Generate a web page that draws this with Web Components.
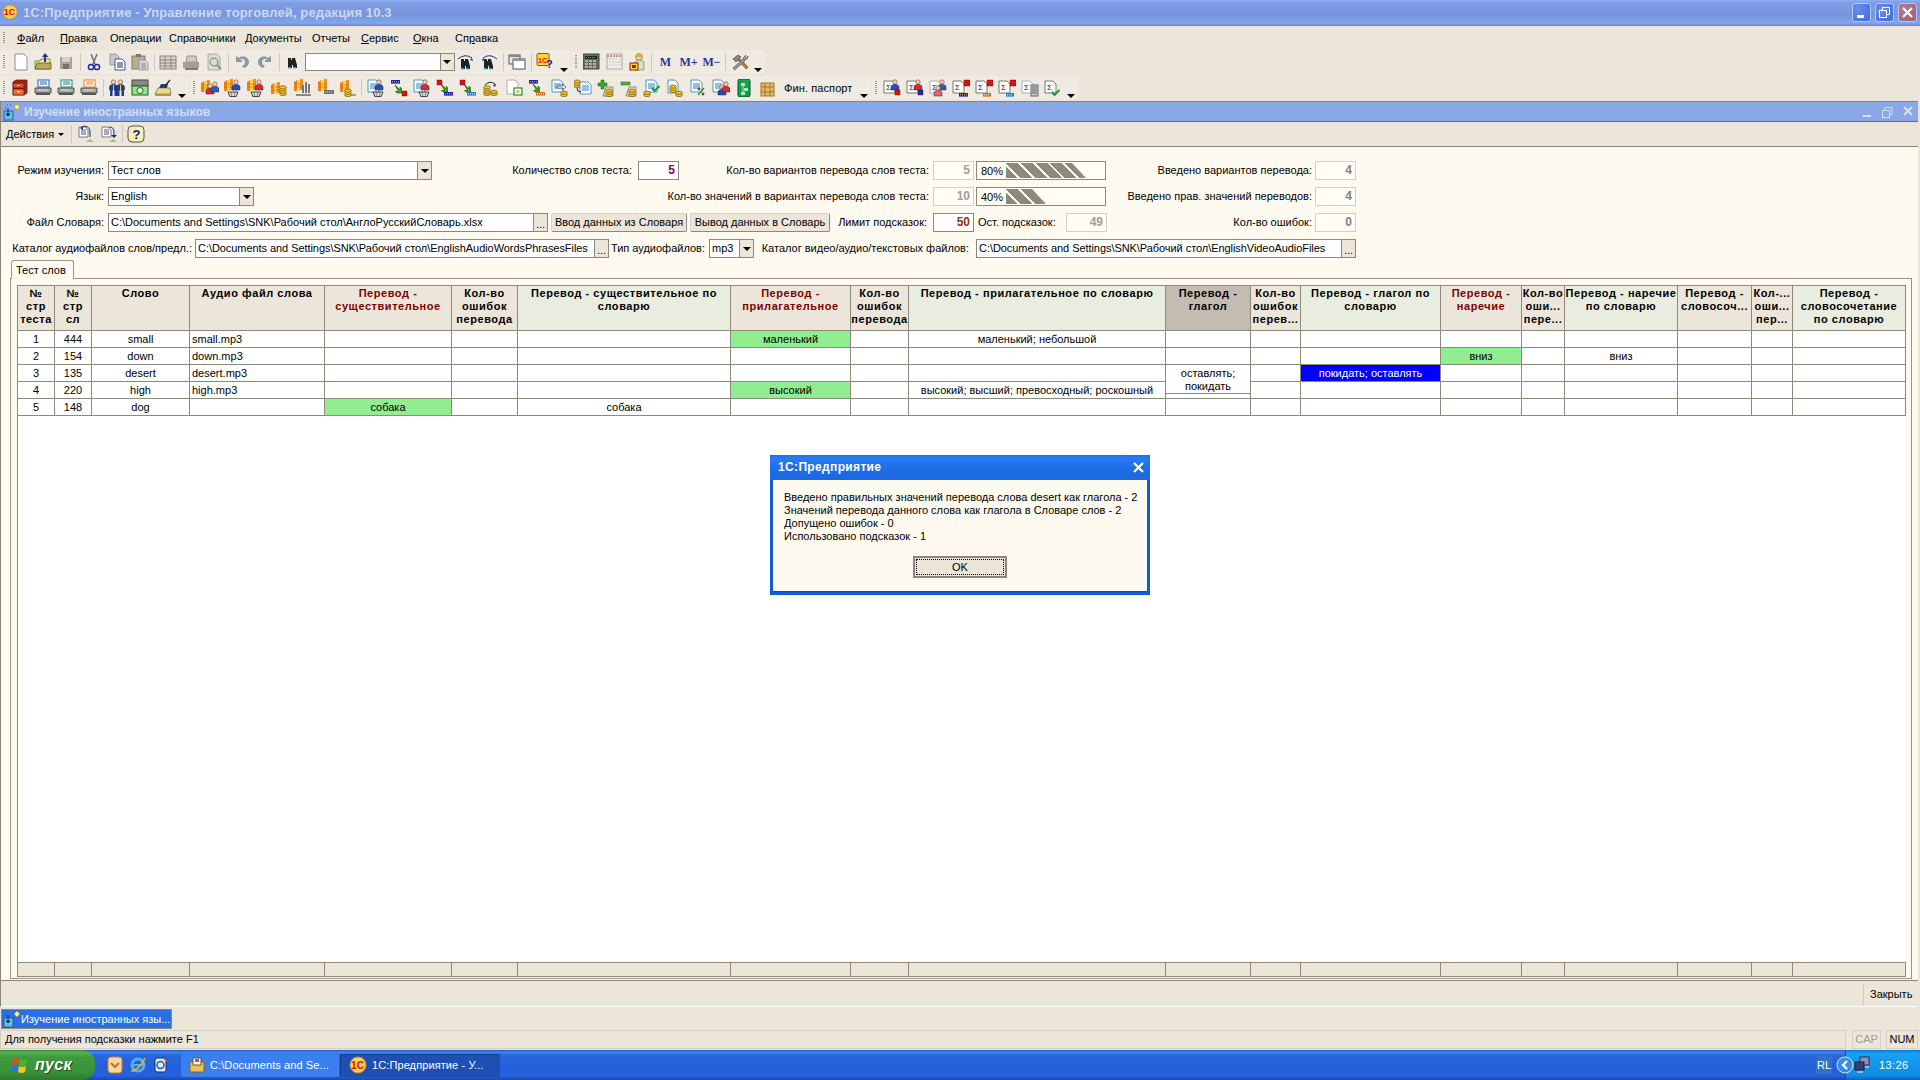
<!DOCTYPE html>
<html lang="ru">
<head>
<meta charset="utf-8">
<title>1С:Предприятие</title>
<style>
html,body{margin:0;padding:0;height:100%;overflow:hidden}
body{font:11px "Liberation Sans",Arial,sans-serif;color:#000;background:#ece5da}
</style>
</head>
<body>
<desk-top>
    <title-bar></title-bar>
    <menu-bar>
        <menu-item w="43"><u>Ф</u>айл</menu-item>
        <menu-item w="50"><u>П</u>равка</menu-item>
        <menu-item w="59">Операции</menu-item>
        <menu-item w="76">Справочники</menu-item>
        <menu-item w="67">Документы</menu-item>
        <menu-item w="49">Отчеты</menu-item>
        <menu-item w="52"><u>С</u>ервис</menu-item>
        <menu-item w="42"><u>О</u>кна</menu-item>
        <menu-item w="50">Сп<u>р</u>авка</menu-item>
    </menu-bar>
    <tool-row top="1">
        <tool-bar items="new open save | cut copy paste | table print preview | undo redo | binoc combo findnext findprev | windows | help1c >"></tool-bar>
        <tool-bar items="calc calendar lock | t:M t:M+ t:M− | hammer >"></tool-bar>
    </tool-row>
    <tool-row top="2">
        <tool-bar items="cabinet prtable prgreen prorange | people money writing >"></tool-bar>
        <tool-bar items="bman bmancart bredcart bcoins bchart bbar bcoin2 | dmancart barcube dredcart cubebar cubetab coinarrow docbox barorange docarrow coinlines pluscoin minuscoin doccheck doccoins docpercent docmen greenbox woodbox txt:Фин._паспорт >"></tool-bar>
        <tool-bar items="s1 s2 s3 s4 s5 s6 s7 s8 >"></tool-bar>
    </tool-row>
    <child-window>
        <form-panel>
            <form-row>
                <f-label w="108" pr="4">Режим изучения:</f-label>
                <f-combo w="324">Тест слов</f-combo>
                <f-label w="206" pr="6">Количество слов теста:</f-label>
                <f-input w="41" value="5" color="#800080"></f-input>
                <f-label w="254" pr="4">Кол-во вариантов перевода слов теста:</f-label>
                <f-input w="41" value="5" off></f-input>
                <f-progress percent="80"></f-progress>
                <f-label w="209" pr="3">Введено вариантов перевода:</f-label>
                <f-input w="41" value="4" off bold></f-input>
            </form-row>
            <form-row>
                <f-label w="108" pr="4">Язык:</f-label>
                <f-combo w="146">English</f-combo>
                <f-label w="679" pr="4">Кол-во значений в вариантах перевода слов теста:</f-label>
                <f-input w="41" value="10" off></f-input>
                <f-progress percent="40"></f-progress>
                <f-label w="209" pr="3">Введено прав. значений переводов:</f-label>
                <f-input w="41" value="4" off bold></f-input>
            </form-row>
            <form-row>
                <f-label w="108" pr="4">Файл Словаря:</f-label>
                <f-path w="440">C:\Documents and Settings\SNK\Рабочий стол\АнглоРусскийСловарь.xlsx</f-path>
                <f-button w="136" ml="3">Ввод данных из Словаря</f-button>
                <f-button w="140" ml="3">Вывод данных в Словарь</f-button>
                <f-label w="103" pr="6">Лимит подсказок:</f-label>
                <f-input w="41" value="50" color="#993300"></f-input>
                <f-label w="92" left>Ост. подсказок:</f-label>
                <f-input w="41" value="49" off></f-input>
                <f-label w="208" pr="3">Кол-во ошибок:</f-label>
                <f-input w="41" value="0" off bold></f-input>
            </form-row>
            <form-row>
                <f-label w="195" pr="3">Каталог аудиофайлов слов/предл.:</f-label>
                <f-path w="414" tight>C:\Documents and Settings\SNK\Рабочий стол\EnglishAudioWordsPhrasesFiles</f-path>
                <f-label w="100" pr="4">Тип аудиофайлов:</f-label>
                <f-combo w="45">mp3</f-combo>
                <f-label w="222" pr="7">Каталог видео/аудио/текстовых файлов:</f-label>
                <f-path w="380" tight>C:\Documents and Settings\SNK\Рабочий стол\EnglishVideoAudioFiles</f-path>
            </form-row>
            <tab-page label="Тест слов">
                <data-grid></data-grid>
            </tab-page>
        </form-panel>
    </child-window>
    <window-tabs>Изучение иностранных язы...</window-tabs>
    <status-bar>Для получения подсказки нажмите F1</status-bar>
    <task-bar></task-bar>
    <msg-box caption="1С:Предприятие">Введено правильных значений перевода слова desert как глагола - 2
Значений перевода данного слова как глагола в Словаре слов - 2
Допущено ошибок - 0
Использовано подсказок - 1</msg-box>
</desk-top>

<script>
// **************************************************************************** icon parts
const doc = (x, y, w, h, s = "#556", f = "#fff") => `<path d="M${x} ${y}h${w - 3}l3 3v${h - 3}h-${w}z" fill="${f}" stroke="${s}" stroke-width=".8"/>`;
const lines = (x, y, w, n = 3, c = "#2b7fc0") => Array(n).fill().map((_, i) => `<path d="M${x} ${y + i * 2}h${w}" stroke="${c}"/>`).join("");
const coins = (x, y, n = 3) => Array(n).fill().map((_, i) => `<ellipse cx="${x}" cy="${y - i * 2.2}" rx="3.4" ry="1.6" fill="#f0c030" stroke="#7a5a00" stroke-width=".7"/>`).join("");
const man = (x, y, c) => `<circle cx="${x}" cy="${y}" r="2.2" fill="#f6cfa8" stroke="#622" stroke-width=".5"/><path d="M${x - 4} ${y + 8}v-3q0-2.6 4-2.6t4 2.6v3z" fill="${c}" stroke="#224" stroke-width=".5"/>`;
const cart = (x, y) => `<path d="M${x} ${y}h10l-1.800 4.500h-6.400z" fill="#d8d8d8" stroke="#333" stroke-width=".9"/><path d="M${x + 3.300} ${y}v4.500M${x + 6.600} ${y}v4.500" stroke="#555" stroke-width=".6"/>`;
const books = (x, y) => `<path d="M${x} ${y + 2}l3-2v11h-3z" fill="#f08020"/><path d="M${x + 3} ${y}h3v11h-3z" fill="#f8d040"/><path d="M${x + 6} ${y - 1}h3v11h-3z" fill="#f09020"/><path d="M${x} ${y + 4}h9M${x} ${y + 7}h9" stroke="#b06010" stroke-width=".5"/>`;
const cube = (x, y, c = "#e01010", s = 5) => `<rect x="${x}" y="${y}" width="${s}" height="${s}" fill="${c}" stroke="#600" stroke-width=".4"/>`;
const tag = (x, y, c = "#2020a0", d = "#ffd040", w = 9) => `<rect x="${x}" y="${y}" width="${w}" height="3.600" fill="${c}"/><path d="M${x + 1} ${y + 1.800}h${w - 2}" stroke="${d}" stroke-dasharray="1 1"/>`;
const garrow = (x, y) => `<path d="M${x} ${y}l5 5v-3l1.500 1.500v4.500h-4.500l-1.500-1.500h3z" fill="#40b020" stroke="#104000" stroke-width=".6"/>`;
const pct = (x, y) => `<path d="M${x} ${y + 7}l6-7" stroke="#109030" stroke-width="1.200"/>${cube(x, y, "#20a040", 2)}${cube(x + 4, y + 5, "#20a040", 2)}`;
const chk = (x, y) => `<path d="M${x} ${y + 2}l2.500 3 5-5" fill="none" stroke="#10a030" stroke-width="2"/>`;
const bdoc = (x = 1, y = 2) => doc(x, y, 11, 12, "#2b7fc0") + lines(x + 2, y + 4, 7);
const sig = (x = 1, y = 2, c = "#555") => doc(x, y, 11, 12, c) + `<text x="${x + 2}" y="${y + 9}" font-size="8" fill="#222" font-family="Liberation Sans">Σ</text>`;
const printer = c => `<rect x="4" y="1" width="11" height="7" fill="#fff" stroke="${c}"/>${lines(6, 3, 7, 2, c)}<path d="M1 9h16v5H1z" fill="#a8a8a8" stroke="#333" stroke-width=".8"/><path d="M2 14h14v2H2z" fill="#555"/><path d="M4 11h10" stroke="#ddd"/>`;
const binoc = (x = 3, y = 5) => `<path d="M${x + 1} ${y}h3v2h1v-2h3l2 7v3h-4v-3H${x + 5}v3h-4v-3z" fill="#222"/><rect x="${x + 1}" y="${y + 9}" width="3" height="1.500" fill="#40a0d0"/><rect x="${x + 6}" y="${y + 9}" width="3" height="1.500" fill="#40a0d0"/>`;
const logo1c = (cx, cy, r) => `<circle cx="${cx}" cy="${cy}" r="${r}" fill="#fbd24a" stroke="#d08a20" stroke-width=".8"/><text x="${cx - r + 1}" y="${cy + r * .45}" font-size="${r * 1.25}" font-weight="700" fill="#d81010" font-family="Liberation Sans">1С</text>`;

// **************************************************************************** icons, 18x18
const ICONS = {
    new: doc(4, 1, 12, 16, "#777"),
    open: `<path d="M1 8h5l1-2h9v10H1z" fill="#f6ea9c" stroke="#776a20" stroke-width=".8"/><path d="M1 16l2-6h14v6z" fill="#b8ac60" stroke="#665a20" stroke-width=".8"/><path d="M11 0l3.500 4H12v5h-2V4H8z" fill="#203a90"/>`,
    save: `<rect x="3" y="4" width="12" height="12" fill="#a8a498"/><rect x="5" y="4" width="8" height="5" fill="#d4d0c4"/><rect x="6" y="11" width="6" height="5" fill="#78746a"/>`,
    cut: `<path d="M6 1l4 10M12 1L8 11" stroke="#667" stroke-width="1.400"/><circle cx="6" cy="14" r="2.600" fill="none" stroke="#1c2c98" stroke-width="1.500"/><circle cx="12" cy="14" r="2.600" fill="none" stroke="#1c2c98" stroke-width="1.500"/>`,
    copy: doc(2, 1, 9, 11, "#8c8c9c", "#c8c8d0") + doc(7, 6, 10, 11, "#1c2c80") + lines(9, 10, 6, 3, "#1c2c80"),
    paste: `<rect x="1" y="3" width="13" height="13" fill="#b4b094" stroke="#807c64"/><rect x="5" y="1" width="5" height="3" fill="#807c64"/>` + doc(8, 7, 9, 10, "#8c8c9c", "#d8d8dc") + lines(10, 11, 5, 3, "#888"),
    table: `<rect x="1" y="3" width="16" height="13" fill="#d8d4c8" stroke="#8a8678"/><path d="M1 7h16M1 10h16M1 13h16M6 3v13M12 3v13" stroke="#8a8678"/>`,
    print: `<path d="M5 3h9l1 6H4z" fill="#d0ccc0" stroke="#989488"/><path d="M1 9h16v6H1z" fill="#a4a094"/><path d="M3 15h13v2H3z" fill="#807c70"/>`,
    preview: doc(3, 1, 12, 16, "#a0a094", "#dcdcd0") + `<circle cx="9" cy="9" r="3.800" fill="#cfe0e4" stroke="#908c80" stroke-width="1.200"/><path d="M12 12l4 4" stroke="#908c80" stroke-width="2"/>`,
    undo: `<path d="M4 3v6h6V7L7 6.500C9 5 13 6 13 9c0 2-1 3-3 4l2 2c3-1 5-3 5-6 0-5-7-7-10-4z" fill="#8b98a8" transform="translate(-1 0)"/>`,
    redo: `<g transform="matrix(-1 0 0 1 18 0)"><path d="M4 3v6h6V7L7 6.500C9 5 13 6 13 9c0 2-1 3-3 4l2 2c3-1 5-3 5-6 0-5-7-7-10-4z" fill="#8b98a8" transform="translate(-1 0)"/></g>`,
    binoc: binoc(),
    findnext: binoc(3, 6) + `<path d="M1 6Q8 0 15 5" fill="none" stroke="#203080"/><path d="M15 5l1 3-3-1z" fill="#203080"/>`,
    findprev: binoc(3, 6) + `<path d="M17 6Q10 0 3 5" fill="none" stroke="#203080"/><path d="M3 5l-1 3 3-1z" fill="#203080"/>`,
    windows: `<rect x="1" y="2" width="11" height="9" fill="#e8e8e8" stroke="#555"/><rect x="1" y="2" width="11" height="2" fill="#808890"/><rect x="5" y="6" width="12" height="10" fill="#fff" stroke="#555"/><rect x="5" y="6" width="12" height="2" fill="#909aa8"/>`,
    help1c: `<rect x="1" y="0.500" width="12" height="12" rx="1" fill="#f8d830" stroke="#a05010"/><text x="2" y="9.500" font-size="7" font-weight="700" fill="#d81010" font-family="Liberation Sans">1С</text><text x="10" y="15" font-size="11" font-weight="700" fill="#1c2c90" font-family="Liberation Sans">?</text>`,
    calc: `<rect x="0" y="1" width="16" height="15" fill="#6a6a64" stroke="#444"/><rect x="2" y="3" width="12" height="3" fill="#103010"/><path d="M3 4.500h10" stroke="#30e030" stroke-dasharray="1 1"/><path d="M2 8h12M2 11h12M2 14h12" stroke="#c4c4bc" stroke-width="1.600" stroke-dasharray="3 1"/>`,
    calendar: `<rect x="1" y="1" width="15" height="15" fill="#f8f6ec" stroke="#aaa89c"/><path d="M1 3h15" stroke="#e06040" stroke-width="1.500" stroke-dasharray="2 1"/><path d="M1 6h15M1 9h15M1 12h15M4 4v12M7 4v12M10 4v12M13 4v12" stroke="#c4c4d8" stroke-width=".6"/>`,
    lock: `<circle cx="10" cy="4" r="3.400" fill="#f6cfa8" stroke="#a87"/><path d="M7 1h6l1 3H7z" fill="#d8b040"/><path d="M6 17V9q1-2 4-2t5 2v8z" fill="#cfe0c0" stroke="#689058" stroke-width=".7"/><rect x="1" y="10" width="8" height="7" fill="#f8d820" stroke="#802020"/><rect x="3" y="12" width="4" height="3" fill="#a02020"/>`,
    hammer: `<path d="M2 6l5-4 3 2-5 5z" fill="#8a8a8a" stroke="#444" stroke-width=".7"/><path d="M7 7l8 9 2-2-8-8z" fill="#b08040" stroke="#604010" stroke-width=".6"/><path d="M15 2l-3 3 1 2 3-1 1-3-1 2-2-1z" fill="#aaa" stroke="#444" stroke-width=".6"/><path d="M12 6L2 15l1.500 2L14 8z" fill="#999" stroke="#444" stroke-width=".6"/>`,
    cabinet: `<path d="M2 3l3-2h11v13l-3 2H2z" fill="#a02818" stroke="#401008" stroke-width=".7"/><rect x="2" y="4" width="11" height="5" fill="#e84820" stroke="#401008" stroke-width=".6"/><rect x="2" y="10" width="11" height="6" fill="#f07030" stroke="#401008" stroke-width=".6"/><rect x="6" y="6" width="3" height="1" fill="#fff"/><rect x="6" y="12" width="3" height="1" fill="#fff"/>`,
    prtable: printer("#2060b0"),
    prgreen: printer("#108a80"),
    prorange: printer("#e08030"),
    people: man(5.500, 3, "#1c3c90") + `<path d="M2 10v7h2.500v-7zM6.500 10v7H9v-7z" fill="#1c3c90"/>` + man(12.500, 3, "#1c3c90") + `<path d="M9 10v7h2.500v-7zM13.500 10v7H16v-7z" fill="#1c3c90"/><path d="M5 6h1v6H5zM12 6h1v6h-1z" fill="#f8d820"/>`,
    money: `<rect x="1" y="1" width="16" height="6" fill="#8a8a84" stroke="#444"/><rect x="1" y="7" width="16" height="9" fill="#90e090" stroke="#206020"/><circle cx="9" cy="11.500" r="3" fill="#f0f8d0" stroke="#206020"/>`,
    writing: `<path d="M1 15l3-6h12l1 6z" fill="#e8dc90" stroke="#807020" stroke-width=".7"/><path d="M5 9l2-4h7l-1 4z" fill="#2a3a9c"/><path d="M11 7l5-6" stroke="#222" stroke-width="1.300"/><path d="M1 15h16v2H1z" fill="#a89850"/>`,
    bman: books(0, 2) + man(9, 7, "#e02828") + man(14, 5, "#3060b0"),
    bmancart: books(0, 1) + man(12, 3, "#2050c0") + cart(4, 13),
    bredcart: books(0, 1) + man(12, 3, "#e02828") + cart(4, 13),
    bcoins: books(1, 4) + coins(13, 15, 4),
    bchart: books(1, 1) + `<path d="M10 6v8M13 3v11M16 5v9" stroke="#777" stroke-width="2"/><path d="M3 15h15v2H3z" fill="#888"/>`,
    bbar: books(2, 1) + `<rect x="8" y="11" width="10" height="4" fill="#707070"/><path d="M9 13h8" stroke="#ddd" stroke-dasharray="1 1"/>`,
    bcoin2: books(1, 2) + coins(9, 16, 3) + `<path d="M12 16h5" stroke="#555"/>`,
    dmancart: bdoc(1, 1) + man(12, 3, "#2050c0") + cart(6, 13),
    barcube: tag(1, 1) + garrow(5, 6) + cube(12, 12),
    dredcart: bdoc(1, 1) + man(12, 3, "#e02828") + cart(6, 13),
    cubebar: cube(1, 1) + garrow(5, 5) + tag(8, 13),
    cubetab: cube(1, 1) + garrow(5, 5) + tag(8, 13, "#2080d0", "#fff"),
    coinarrow: coins(5, 15, 4) + coins(12, 15, 2) + `<path d="M3 6Q8 1 13 5" fill="none" stroke="#223"/><path d="M14 5l-3 1 2 2z" fill="#223"/>`,
    docbox: doc(2, 1, 11, 14, "#999") + `<rect x="9" y="9" width="8" height="7" fill="#fff" stroke="#209030" stroke-width="1.200"/><circle cx="13" cy="12.500" r="1.500" fill="#e0b020"/>`,
    barorange: tag(1, 1) + garrow(5, 5) + tag(8, 13, "#d07020", "#fff"),
    docarrow: bdoc(1, 1) + `<path d="M6 7h6l-1-2 4 3-4 3 1-2H6z" fill="#fff" stroke="#223" stroke-width=".6"/>` + coins(13, 16, 2),
    coinlines: coins(3, 7, 3) + doc(6, 3, 11, 12, "#2b7fc0") + lines(8, 7, 7) + `<path d="M3 9q0 4 4 4" fill="none" stroke="#223"/>`,
    pluscoin: `<path d="M4 1h3v3h3v3H7v3H4V7H1V4h3z" fill="#30b020" stroke="#105000" stroke-width=".5"/><path d="M9 8h7v9H6z" fill="#e8e4d8" stroke="#888"/>` + coins(12, 16, 3),
    minuscoin: `<path d="M1 3h9v3H1z" fill="#60b040" stroke="#105000" stroke-width=".5"/><path d="M9 8h7v9H6z" fill="#e8e4d8" stroke="#888"/>` + coins(12, 16, 3),
    doccheck: bdoc(3, 1) + coins(4, 16, 2) + chk(9, 7),
    doccoins: doc(2, 1, 10, 13, "#2b7fc0") + coins(7, 12, 3) + coins(13, 16, 2),
    docpercent: bdoc(2, 1) + pct(9, 9),
    docmen: bdoc(1, 1) + man(10, 8, "#2050c0") + man(14, 5, "#e02828"),
    greenbox: `<rect x="3" y="0" width="12" height="18" rx="2" fill="#18a050" stroke="#0a5028"/><path d="M6 4h4v3H6zM9 9h4v3H9zM6 13h4v3H6z" fill="#a0f0b8"/><path d="M8 7v6" stroke="#a0f0b8"/>`,
    woodbox: `<rect x="3" y="4" width="13" height="13" fill="#e8b860" stroke="#a07830"/><path d="M3 8h13M3 13h13M7 4v13M12 4v13" stroke="#a07830"/>`,
    s1: sig() + man(12, 3, "#2050c0") + cube(12, 11),
    s2: sig() + man(12, 3, "#e02828") + cube(12, 11, "#1030c0"),
    s3: sig(1, 2, "#999") + man(13, 3, "#3060b0") + man(9, 9, "#f06060"),
    s4: sig() + cube(12, 1, "#e01010", 6) + tag(7, 14),
    s5: sig() + cube(12, 1, "#e01010", 6) + tag(8, 14, "#d07020", "#fff", 8),
    s6: sig() + cube(12, 1, "#e01010", 6) + tag(8, 14, "#2080d0", "#fff", 8),
    s7: sig(1, 2, "#999") + `<rect x="10" y="6" width="7" height="11" fill="#c8c8c8" stroke="#666"/>` + lines(11, 8, 5, 4, "#666"),
    s8: sig() + chk(8, 11),
};
const svg = (name, size = 18) => `<svg xmlns="http://www.w3.org/2000/svg" width="${size}" height="${size}" viewBox="0 0 18 18">${ICONS[name] || name}</svg>`;
const LOGO = logo1c(9, 9, 8);
const CHILDICON = `<path d="M11 4l3-3 3 3-3 3z" fill="#fff080" stroke="#a09020" stroke-width=".6"/><rect x="1" y="8" width="9" height="9" fill="#60c0e0" stroke="#205080" stroke-width=".8"/><path d="M5 5v8l-2-2h4l-2 2" fill="#102a70" stroke="#102a70"/><path d="M4 2h1M2 5h1M7 2h1" stroke="#446"/>`;
const WINFLAG = `<path d="M2 3q3-2 6 0l-1 6q-3-2-6 0z" fill="#e84a20"/><path d="M9 3q3 2 7 0l-1 6q-3 2-7 0z" fill="#50b030"/><path d="M1 10q3-2 6 0l-1 6q-3-2-6 0z" fill="#3070e0"/><path d="M8 10q3 2 7 0l-1 6q-3 2-7 0z" fill="#f8c820"/>`;

// **************************************************************************** small helper for simple elements
const define = (name, css, html) => customElements.define(name, class extends HTMLElement {
    connectedCallback() {
        if (this.shadowRoot) return;
        this.attachShadow({ mode: "open" }).innerHTML = `<style>${css}</style>` + (typeof html == "function" ? html(this) : html);
    }
});
const attr = (el, name, dflt = "") => el.hasAttribute(name) ? el.getAttribute(name) : dflt;

// **************************************************************************** page frame
define("desk-top", ":host{display:flex;flex-direction:column;position:relative;width:1920px;height:1080px;overflow:hidden}", "<slot></slot>");

// ==================================================================== main window title
define("title-bar", `
    :host{display:flex;align-items:center;height:26px;box-sizing:border-box;padding:0 3px 2px 2px;flex:none;
        background:linear-gradient(#8fadf2 0,#7d9ce2 3px,#7896df 15px,#7ea6ea 23px,#7d9fe6 24px,#6d78cf 26px)}
    span{font:bold 13px "Liberation Sans",sans-serif;letter-spacing:.13px;color:#ccd8f4;margin-left:5px;flex:1}
    b{width:19px;height:19px;margin-left:4px;box-sizing:border-box;border:1px solid #b8c8f0;border-radius:3px;
        background:radial-gradient(circle at 30% 30%,#6a90ea,#3f68dc);display:flex;align-items:center;justify-content:center}
    b.x{background:radial-gradient(circle at 30% 30%,#b87c90,#a05c74)}
    svg{display:block}`,
    `${svg(LOGO, 16)}<span>1С:Предприятие - Управление торговлей, редакция 10.3</span>
    <b><svg width="13" height="13" viewBox="0 0 13 13"><rect x="2" y="9" width="7" height="3" fill="#fff"/></svg></b>
    <b><svg width="13" height="13" viewBox="0 0 13 13" fill="none" stroke="#fff"><rect x="1.500" y="4.500" width="7" height="7"/><path d="M4.500 4V1.500h7v7H9"/></svg></b>
    <b class="x"><svg width="13" height="13" viewBox="0 0 13 13"><path d="M2 2l9 9M11 2l-9 9" stroke="#fff" stroke-width="2"/></svg></b>`);

// ==================================================================== menu
define("menu-bar", `
    :host{display:flex;align-items:center;height:24px;padding-left:17px;position:relative;flex:none}
    :host::before{content:"";position:absolute;left:3px;top:6px;height:12px;width:2px;
        background:repeating-linear-gradient(#99958a 0 1px,transparent 1px 2px)}`, "<slot></slot>");
define("menu-item", ":host{display:block;white-space:nowrap}", el => `<style>:host{width:${attr(el, "w")}px}</style><slot></slot>`);

// ==================================================================== toolbars
define("tool-row", ":host{display:flex;height:24px;align-items:stretch;flex:none}", el => `<style>:host{margin-top:${attr(el, "top") == 2 ? 2 : 0}px}</style><slot></slot>`);
customElements.define("tool-bar", class extends HTMLElement {
    connectedCallback() {
        if (this.shadowRoot) return;
        let items = this.getAttribute("items").split(/\s+/).map(tok => {
            if (tok == "|") return "<i></i>";
            if (tok == ">") return "<em></em>";
            if (tok == "combo") return '<div class="combo"><s></s><u></u></div>';
            if (tok.startsWith("t:")) return `<span class="m">${tok.slice(2)}</span>`;
            if (tok.startsWith("txt:")) return `<span class="txt">${tok.slice(4).replace("_", " ")}</span>`;
            return `<span>${svg(tok)}</span>`;
        }).join("");
        this.attachShadow({ mode: "open" }).innerHTML = `<style>
            :host{display:flex;align-items:center;position:relative;padding-left:8.500px;margin-right:1px;
                background:#f0ebe2;border-radius:3px}
            :host::before{content:"";position:absolute;left:3px;top:5px;height:14px;width:2px;
                background:repeating-linear-gradient(#99958a 0 1px,transparent 1px 2px)}
            span{width:23px;height:20px;display:flex;align-items:center;justify-content:center;flex:none}
            .m{font:bold 12px "Liberation Serif",serif;color:#2c3196;white-space:nowrap}
            .txt{width:78.500px;justify-content:flex-start;padding-left:6px;box-sizing:border-box;white-space:nowrap;letter-spacing:.1px}
            i{width:1px;height:18px;background:#cfc9bc;margin:0 2px;flex:none}
            em{width:14px;height:20px;position:relative;flex:none}
            em::after{content:"";position:absolute;left:3px;bottom:0;border:4px solid transparent;border-top:4px solid #000;border-bottom:0}
            .combo{width:150px;height:18px;box-sizing:border-box;border:1px solid #8e8878;background:#fff;display:flex;justify-content:flex-end}
            .combo u{width:13px;background:#ece5da;border-left:1px solid #8e8878;position:relative}
            .combo u::after{content:"";position:absolute;left:2.500px;top:6px;border:4px solid transparent;border-top:4px solid #000;border-bottom:0}
            svg{display:block}
            </style>${items}`;
    }
});

// ==================================================================== child window
define("child-window", `
    :host{display:flex;flex-direction:column;flex:1;min-height:0;margin-top:1px;margin-right:2px;
        border-left:1px solid #8a8474;border-top:1px solid #8a8474;border-bottom:1px solid #fff}
    header{display:flex;align-items:center;height:19px;background:#8aa8e6;border-bottom:1px solid #4f69ad;padding-left:2px;flex:none}
    header span{font:bold 12px "Liberation Sans",sans-serif;color:#d2def6;margin-left:3px;flex:1}
    header svg{display:block}
    nav{display:flex;align-items:center;height:24px;border-bottom:1px solid #8a8474;padding-left:5px;flex:none}
    nav label{display:block;width:65px;white-space:nowrap}
    nav label::after{content:"";display:inline-block;margin-left:4px;vertical-align:2px;border:3px solid transparent;border-top:3px solid #000;border-bottom:0}
    nav i{width:1px;height:18px;background:#cfc9bc;flex:none}
    nav span{width:23px;display:flex;justify-content:center;flex:none}
    main{flex:1;min-height:0;display:flex;flex-direction:column}
    footer{height:25px;flex:none;border-top:1px solid #8a8474;display:flex;justify-content:flex-end;align-items:center}
    footer i{height:22px;width:1px;background:#d4cfc2}
    footer span{width:54px;padding-left:6px;box-sizing:border-box;white-space:nowrap}`,
    `<header>${svg(CHILDICON)}<span>Изучение иностранных языков</span>
        <svg width="58" height="18" viewBox="0 0 58 18" fill="none" stroke="#d6e0f6"><path d="M3 13h8" stroke-width="2"/><rect x="22.500" y="7.500" width="7" height="7"/><path d="M25 7V4.500h7v7h-2"/><path d="M44 4l8 8M52 4l-8 8" stroke-width="2"/></svg></header>
    <nav><label>Действия</label><i></i>
        <span style="margin-left:2px">${svg(doc(2, 2, 9, 10, "#557") + lines(4, 5, 5, 3, "#557") + `<path d="M6 5V1l-3 2z" fill="#103080"/><path d="M6 1q7 0 7 6v5" fill="none" stroke="#103080"/><path d="M9 17l4-3 4 3z" fill="#b8b090"/>`)}</span>
        <span>${svg(doc(2, 2, 9, 10, "#557") + lines(4, 5, 5, 3, "#557") + `<path d="M9 2q5 0 5 5v4" fill="none" stroke="#103080"/><path d="M11 10h6l-3 3z" fill="#103080"/><path d="M9 17l4-3 4 3z" fill="#b8b090"/>`)}</span>
        <i style="margin-left:2px"></i>
        <span style="margin-left:1px">${svg(`<rect x="1" y="1" width="16" height="16" rx="4" fill="#f6f0b8" stroke="#555"/><text x="5.500" y="14" font-size="13" font-weight="700" fill="#10208c" font-family="Liberation Sans">?</text>`)}</span></nav>
    <main><slot></slot></main>
    <footer><i></i><span>Закрыть</span></footer>`);

// ==================================================================== form
define("form-panel", ":host{display:flex;flex-direction:column;flex:1;min-height:0;background:#fffaf0;padding-top:14px}", "<slot></slot>");
define("form-row", ":host{display:flex;height:19px;margin-bottom:7px;margin-left:-1px;flex:none}", "<slot></slot>");
define("f-label", ":host{display:block;white-space:nowrap;line-height:19px;box-sizing:border-box;text-align:right;flex:none}",
    el => `<style>:host{width:${attr(el, "w")}px;padding-right:${attr(el, "pr", 0)}px;${el.hasAttribute("left") ? "text-align:left;padding-left:4px" : ""}}</style><slot></slot>`);
const BOX = `
    :host{display:flex;height:19px;box-sizing:border-box;border:1px solid #8e8878;background:#fff;flex:none;line-height:17px}
    :host([tight]) div{letter-spacing:-.06px}
    div{flex:1;padding-left:2px;white-space:nowrap;overflow:hidden}
    b{width:13px;flex:none;background:#ece5da;border-left:1px solid #8e8878;position:relative;font-weight:normal;text-align:center;line-height:20px}
    b.drop::after{content:"";position:absolute;left:2.500px;top:7px;border:4px solid transparent;border-top:4px solid #000;border-bottom:0}`;
define("f-combo", BOX, el => `<style>:host{width:${attr(el, "w")}px}</style><div><slot></slot></div><b class="drop"></b>`);
define("f-path", BOX, el => `<style>:host{width:${attr(el, "w")}px}</style><div><slot></slot></div><b>...</b>`);
define("f-input", `
    :host{display:block;height:19px;box-sizing:border-box;border:1px solid #8e8878;background:#fff;flex:none;
        text-align:right;padding-right:3px;line-height:17px;font-weight:bold;font-size:12px}
    :host([off]){border-color:#d4d0c4;background:#fffdf6;color:#a0a096}
    :host([off][bold]){color:#808078}`,
    el => `<style>:host{width:${attr(el, "w")}px;${el.hasAttribute("color") ? "color:" + attr(el, "color") : ""}}</style>${attr(el, "value")}`);
define("f-button", `
    :host{display:block;height:19px;box-sizing:border-box;border:1px solid #8e8878;border-top-color:#d8d3c6;border-left-color:#d8d3c6;
        background:#ece5da;text-align:center;line-height:17px;white-space:nowrap;flex:none;border-radius:2px}`,
    el => `<style>:host{width:${attr(el, "w")}px;margin-left:${attr(el, "ml", 0)}px}</style><slot></slot>`);
define("f-progress", `
    :host{display:flex;align-items:center;width:130px;height:19px;margin-left:2px;box-sizing:border-box;border:1px solid #8e8878;background:#fffdf6;flex:none}
    span{width:29px;padding-left:4px;box-sizing:border-box;flex:none}
    div{height:15px;background:repeating-linear-gradient(45deg,#8e8a78 0 8.400px,#fffdf6 8.400px 10.400px);
        clip-path:polygon(0 0,calc(100% - 14px) 0,100% 100%,0 100%)}`,
    el => `<span>${attr(el, "percent")}%</span><div style="width:${attr(el, "percent")}px"></div>`);

// ==================================================================== tab page
define("tab-page", `
    :host{display:flex;flex-direction:column;flex:1;min-height:0;margin:-5px 6px 1px 9px}
    label{display:block;align-self:flex-start;margin-left:1px;width:63px;height:19px;box-sizing:border-box;padding:3px 0 0 4px;flex:none;
        border:1px solid #9a9484;border-bottom:0;border-radius:3px 3px 0 0;background:#fffaf0;margin-bottom:-1px;position:relative;z-index:1}
    main{flex:1;min-height:0;display:flex;border:1px solid #9a9484;padding:6px 5px 1px 6px}`,
    el => `<label>${attr(el, "label")}</label><main><slot></slot></main>`);

// **************************************************************************** <data-grid>
customElements.define("data-grid", class extends HTMLElement {
    // -------------------------------------------------------------------- columns
    get cols() {
        return [37, 37, 98, 135, 127, 66, 213, 120, 58, 257, 85, 50, 140, 81, 43, 113, 74, 41, 113];
    }
    get head() {
        return [
            ["№\nстр\nтеста"], ["№\nстр\nсл"], ["Слово"], ["Аудио файл слова"],
            ["Перевод -\nсуществительное", "red"], ["Кол-во\nошибок\nперевода"],
            ["Перевод - существительное по\nсловарю", "dict"],
            ["Перевод -\nприлагательное", "red"], ["Кол-во\nошибок\nперевода"],
            ["Перевод - прилагательное по словарю", "dict"],
            ["Перевод -\nглагол", "cur"], ["Кол-во\nошибок\nперев..."],
            ["Перевод - глагол по\nсловарю", "dict"],
            ["Перевод -\nнаречие", "red"], ["Кол-во\nоши...\nпере..."],
            ["Перевод - наречие\nпо словарю", "dict"],
            ["Перевод -\nсловосоч..."], ["Кол-...\nоши...\nпер..."],
            ["Перевод -\nсловосочетание\nпо словарю", "dict"],
        ];
    }
    get rows() {
        return [
            { 0: "1", 1: "444", 2: "small", 3: "small.mp3", 7: "маленький*", 9: "маленький; небольшой" },
            { 0: "2", 1: "154", 2: "down", 3: "down.mp3", 13: "вниз*", 15: "вниз" },
            { 0: "3", 1: "135", 2: "desert", 3: "desert.mp3", 12: "покидать; оставлять#" },
            { 0: "4", 1: "220", 2: "high", 3: "high.mp3", 7: "высокий*", 9: "высокий; высший; превосходный; роскошный" },
            { 0: "5", 1: "148", 2: "dog", 4: "собака*", 6: "собака" },
        ];
    }
    // ==================================================================== connectedCallback
    connectedCallback() {
        if (this.shadowRoot) return;
        let cols = this.cols.map(w => w + "px").join(" ");
        let cell = (txt = "", i) => {
            let cls = txt.endsWith("*") ? "ok" : txt.endsWith("#") ? "sel" : "";
            return `<div class="${cls} ${i == 3 ? "l" : ""}">${txt.replace(/[*#]$/, "")}</div>`;
        };
        this.attachShadow({ mode: "open" }).innerHTML = `<style>
            :host{display:flex;flex-direction:column;flex:1;min-height:0;background:#fff;border:1px solid #8e8a7a;border-right:0;border-bottom:1px solid #8e8a7a;box-sizing:border-box}
            .r{display:grid;grid-template-columns:${cols};flex:none}
            .r>div{box-sizing:border-box;height:17px;line-height:16px;border-right:1px solid #8e8a7a;border-bottom:1px solid #8e8a7a;
                text-align:center;white-space:pre;overflow:hidden}
            .r>div.l{text-align:left;padding-left:2px}
            .r>div.ok{background:#90ee90}
            .r>div.sel{background:#0000ff;color:#fff}
            .h>div{height:45px;background:#ece5da;font-weight:bold;line-height:13px;padding-top:1px;letter-spacing:.55px}
            .h>div.red{color:#7f0000}
            .h>div.dict{background:#e8ede0}
            .h>div.cur{background:#c4bcb0}
            .f{flex:1}
            .b{grid-template-columns:${cols};border-top:1px solid #8e8a7a}
            .b>div{height:13px;background:#ece5da;border-bottom:0}
            .wrap{position:relative}
            .edit{position:absolute;left:1148px;top:79px;width:84px;height:29px;box-sizing:border-box;background:#fff;
                border-bottom:1px solid #8e8a7a;text-align:center;line-height:13px;padding-top:2px;white-space:pre}
            </style>
            <div class="wrap">
            <div class="r h">${this.head.map(([t, c]) => `<div class="${c || ""}">${t}</div>`).join("")}</div>
            ${this.rows.map(r => `<div class="r">${this.cols.map((_, i) => cell(r[i], i)).join("")}</div>`).join("")}
            <div class="edit">оставлять;\nпокидать</div>
            </div>
            <div class="f"></div>
            <div class="r b">${this.cols.map(() => "<div></div>").join("")}</div>`;
    }
});

// ==================================================================== window tabs + status
define("window-tabs", `
    :host{display:flex;align-items:center;height:23px;flex:none;padding-left:1px}
    div{display:flex;align-items:center;width:171px;height:20px;box-sizing:border-box;border:1px solid #8a8a80;background:#2a70e4;color:#fff;padding-left:1px;white-space:nowrap;gap:0}
    svg{display:block}`,
    `<div>${svg(CHILDICON)}<slot></slot></div>`);
define("status-bar", `
    :host{display:flex;height:19px;flex:none;gap:6px;line-height:17px;margin:0 1px 1px 0}
    div{box-sizing:border-box;border:1px solid #d6d0c4;height:19px;flex:none}
    .m{width:1846px;padding-left:4px}
    .c{width:29px;text-align:center;color:#a09c90}
    .n{width:32px;text-align:center;margin-left:-1px}`,
    `<div class="m"><slot></slot></div><div class="c">CAP</div><div class="n">NUM</div>`);

// ==================================================================== task bar
define("task-bar", `
    :host{display:flex;align-items:center;height:30px;flex:none;color:#fff;
        background:linear-gradient(#1f4fc0 0,#3f88f0 2px,#2a66dc 5px,#2560d8 50%,#2462dc 85%,#1b49ad 100%)}
    .start{display:flex;align-items:center;width:95px;height:30px;box-sizing:border-box;padding-left:11px;gap:6px;border-radius:0 13px 13px 0;flex:none;
        background:linear-gradient(#3c8a3c 0,#55b055 8%,#3d9a3d 25%,#3a953a 70%,#2e7a2e 100%);
        font:italic bold 16px "Liberation Sans",sans-serif;text-shadow:1px 1px 1px #1a4a1a;letter-spacing:.3px}
    .q{display:flex;width:86px;padding-left:11px;box-sizing:border-box;gap:5px;flex:none}
    .t{display:flex;align-items:center;height:23px;box-sizing:border-box;border-radius:2px;white-space:nowrap;flex:none;letter-spacing:.1px}
    .t1{width:158px;padding-left:7px;gap:4px;background:#3a7ff0;margin-right:1px}
    .t2{width:160px;padding-left:9px;gap:5px;background:#1e50b4;box-shadow:inset 1px 1px 1px #153c8c}
    .sp{flex:1}
    .rl{padding:3px 1px;background:#3070c8;margin-right:13px}
    .tray{display:flex;align-items:center;width:75px;height:30px;flex:none;box-sizing:border-box;
        background:linear-gradient(#0d70d8 0,#18a0f0 3px,#1196ec 50%,#0f8ce4 85%,#0b62c0 100%);border-left:1px solid #0c4fb0}
    .chev{margin-left:-10px;margin-right:-1px}
    .time{margin-left:8px;letter-spacing:.4px;white-space:nowrap}
    svg{display:block;flex:none}`,
    `<div class="start">${svg(WINFLAG, 18)}<span>пуск</span></div>
    <div class="q">
        ${svg(`<rect x="2" y="1" width="14" height="16" rx="3" fill="#f8d8a0" stroke="#c87830"/><path d="M5 7l4 4 4-4" fill="none" stroke="#c87020" stroke-width="2"/>`)}
        ${svg(`<circle cx="9" cy="9" r="6" fill="none" stroke="#50b0f0" stroke-width="3"/><path d="M4 9h11" stroke="#50b0f0" stroke-width="2"/><path d="M2 15C6 16 14 8 16 2" fill="none" stroke="#f0b020" stroke-width="1.500"/>`)}
        ${svg(`<rect x="3" y="2" width="11" height="14" rx="2" fill="#dce8f8" stroke="#12306c"/><circle cx="8.500" cy="9" r="3.500" fill="none" stroke="#2060c0" stroke-width="1.500"/><path d="M12 3l3 2" stroke="#e06020" stroke-width="1.500"/>`)}
    </div>
    <div class="t t1">${svg(`<path d="M2 6h14v10H2z" fill="#f0c050" stroke="#906010"/><path d="M5 2h8v7H5z" fill="#fff" stroke="#555"/><rect x="7" y="3" width="4" height="3" fill="#d05030"/>`)}<span>C:\\Documents and Se...</span></div>
    <div class="t t2">${svg(LOGO)}<span>1С:Предприятие - У...</span></div>
    <div class="sp"></div>
    <div class="rl">RL</div>
    <div class="tray">
        <span class="chev">${svg(`<circle cx="9" cy="9" r="8" fill="#3a8ae8" stroke="#d0e8ff"/><path d="M11 5L7 9l4 4" fill="none" stroke="#fff" stroke-width="2.200"/>`)}</span>
        ${svg(`<rect x="7" y="1" width="9" height="8" fill="#9090b8" stroke="#203060"/><rect x="2" y="6" width="9" height="8" fill="#3a3f70" stroke="#182040"/><path d="M4 16h6M12 11h4" stroke="#c0c8e0" stroke-width="1.500"/>`)}
        <span class="time">13:26</span>
    </div>`);

// **************************************************************************** <msg-box>
define("msg-box", `
    :host{display:flex;flex-direction:column;position:absolute;left:770px;top:455px;width:380px;height:140px;box-sizing:border-box;
        border:3px solid #0e5cd8;border-top:0;background:#fffaf0;box-shadow:inset 0 -1px #0a48b0}
    header{display:flex;align-items:center;justify-content:space-between;height:25px;margin:0 -3px;padding:0 6px 1px 8px;box-sizing:border-box;flex:none;
        background:linear-gradient(#1e6ae6 0,#2a7cf2 3px,#1e6ee8 50%,#1a68e4 100%);color:#fff;font:bold 12px "Liberation Sans",sans-serif;letter-spacing:.35px}
    main{padding:11px 0 0 11px;line-height:13px;white-space:pre-line}
    button{display:block;margin:13px auto 0;width:94px;height:22px;padding:0;background:#ece5da;border:2px solid #8a8678;outline:1px dotted #000;outline-offset:-4px;
        font:11px "Liberation Sans",sans-serif;color:#000;flex:none}
    svg{display:block}`,
    el => `<header><span>${attr(el, "caption")}</span><svg width="11" height="11" viewBox="0 0 11 11"><path d="M1 1l9 9M10 1l-9 9" stroke="#fff" stroke-width="2.200"/></svg></header>
    <main><slot></slot></main><button>OK</button>`);
</script>
</body>
</html>
